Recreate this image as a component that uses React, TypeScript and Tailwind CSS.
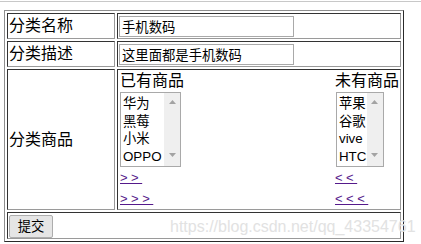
import React from 'react'

const cell = 'border border-t-[#333] border-l-[#333] border-r-[#9a9a9a] border-b-[#9a9a9a]'

function ScrollArrow({ down }: { down?: boolean }) {
  return (
    <svg width="7" height="4" viewBox="0 0 7 4" className="mx-auto">
      <polygon points={down ? '0,0 7,0 3.5,4' : '3.5,0 7,4 0,4'} fill="#a3a3a3" />
    </svg>
  )
}

function ListBox({ items, className }: { items: string[]; className: string }) {
  return (
    <div className={`flex h-[75px] border border-[#a9a9a9] bg-white ${className}`}>
      <div className="flex-1 pl-[2px] pt-[2px] text-[13.33px] leading-[17.5px]">
        {items.map((item) => (
          <div key={item} className="whitespace-nowrap">{item}</div>
        ))}
      </div>
      <div className="flex w-[16px] flex-col justify-between bg-[#efefef] pb-[9px] pt-[7px]">
        <ScrollArrow />
        <ScrollArrow down />
      </div>
    </div>
  )
}

function ArrowLink({ text }: { text: string }) {
  return (
    <a
      href="#"
      className="block font-['Liberation_Sans',sans-serif] text-[13px] leading-[21px] tracking-[3.5px] text-[#551a8b] underline"
    >
      {text}
    </a>
  )
}

export default function App() {
  return (
    <div className="relative h-[244px] w-[421px] bg-white font-['Liberation_Sans','Noto_Sans_CJK_SC',sans-serif] text-black">
      <div className="mt-px h-px bg-[#c8c8c8]" />

      <div className="ml-[4px] mt-[8px] w-[400px] border border-t-[#8f8f8f] border-l-[#8f8f8f] border-r-[#2a2a2a] border-b-[#2a2a2a] p-[2px]">
        <div className="grid grid-cols-[108px_284px] grid-rows-[26px_26px_141px_27px] gap-[2px]">
          <div className={`${cell} flex items-center pl-px text-[16px] leading-[22px]`}>分类名称</div>
          <div className={`${cell} pl-px pt-[2px]`}>
            <input
              readOnly
              value="手机数码"
              className="block h-[21px] w-[175px] border border-[#a9a9a9] px-[2px] text-[13.33px] outline-none"
            />
          </div>

          <div className={`${cell} flex items-center pl-px text-[16px] leading-[22px]`}>分类描述</div>
          <div className={`${cell} pl-px pt-[2px]`}>
            <input
              readOnly
              value="这里面都是手机数码"
              className="block h-[21px] w-[175px] border border-[#a9a9a9] px-[2px] text-[13.33px] outline-none"
            />
          </div>

          <div className={`${cell} flex items-center pl-px text-[16px] leading-[22px]`}>分类商品</div>
          <div className={`${cell} flex justify-between pl-[2px] pr-px`}>
            <div className="flex flex-col items-start">
              <div className="h-[22px] text-[16px] leading-[22px]">已有商品</div>
              <ListBox items={['华为', '黑莓', '小米', 'OPPO']} className="w-[61px]" />
              <ArrowLink text=">>" />
              <ArrowLink text=">>>" />
            </div>
            <div className="flex flex-col items-start">
              <div className="h-[22px] text-[16px] leading-[22px]">未有商品</div>
              <ListBox items={['苹果', '谷歌', 'vive', 'HTC']} className="ml-px w-[48px]" />
              <ArrowLink text="<<" />
              <ArrowLink text="<<<" />
            </div>
          </div>

          <div className={`${cell} col-span-2 pl-px pt-px`}>
            <button className="h-[23px] w-[44px] rounded-[2px] border border-[#adadad] bg-[#e5e5e5] text-[13.33px] leading-none">
              提交
            </button>
          </div>
        </div>
      </div>

      <div className="pointer-events-none absolute left-[170px] top-[218px] whitespace-nowrap font-['Liberation_Sans',sans-serif] text-[16px] leading-[16px] text-[#e2e2e2]">
        https://blog.csdn.net/qq_43354761
      </div>
    </div>
  )
}
